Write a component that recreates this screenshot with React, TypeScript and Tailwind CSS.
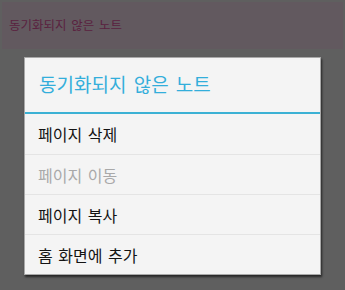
import React from "react";

const FONT = { fontFamily: '"Noto Sans CJK KR", "Noto Sans", sans-serif' };

const items = [
  { label: "페이지 삭제", disabled: false },
  { label: "페이지 이동", disabled: true },
  { label: "페이지 복사", disabled: false },
  { label: "홈 화면에 추가", disabled: false },
];

export default function App() {
  return (
    <div className="w-[345px] h-[290px] bg-[#5f5f5f] flex flex-col overflow-hidden" style={FONT}>
      {/* 뒤쪽 액션바 (어둡게 덮임) */}
      <div className="h-[47px] mt-[2px] mx-[2px] bg-[#62595f] flex items-center px-[7px]">
        <span className="text-[12.5px] text-[#5a2240] leading-none [word-spacing:2px]">동기화되지 않은 노트</span>
      </div>

      {/* 다이얼로그 */}
      <div className="mt-[8px] ml-[24px] w-[297px] bg-[#f4f4f4] shadow-[1px_2px_2px_rgba(0,0,0,0.6)] border border-[#3a3a3a]/40">
        <div className="h-[54px] flex items-center px-[14px] pb-[4px]">
          <span className="text-[19px] text-[#33aedb] leading-none [word-spacing:3px]">
            동기화되지 않은 노트
          </span>
        </div>
        <div className="h-[2px] bg-[#3bb1d4]" />
        {items.map((item, i) => (
          <div
            key={item.label}
            className={`h-[40px] flex items-center px-[13px] ${i > 0 ? "border-t border-[#e4e4e4]" : ""}`}
          >
            <span
              className={`text-[16px] leading-none [word-spacing:2px] ${
                item.disabled ? "text-[#a9a9a9]" : "text-[#141414]"
              }`}
            >
              {item.label}
            </span>
          </div>
        ))}
      </div>
    </div>
  );
}
